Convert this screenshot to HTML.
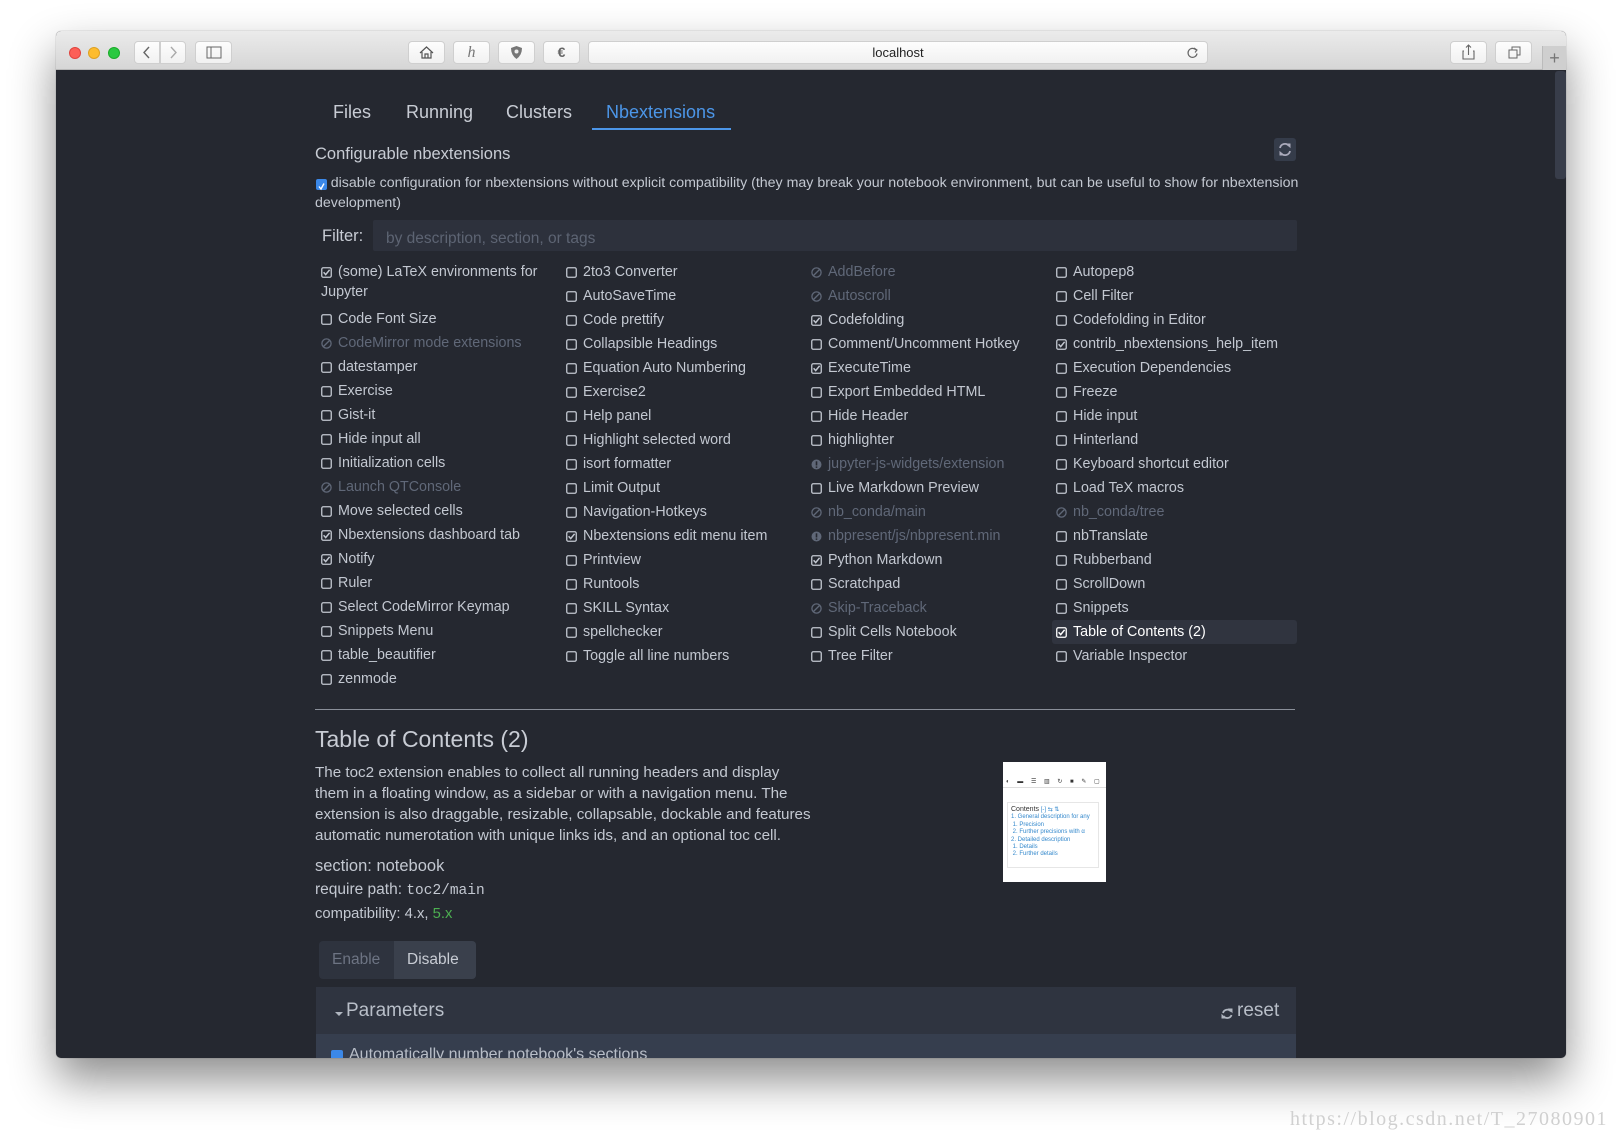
<!DOCTYPE html>
<html><head><meta charset="utf-8">
<style>
*{box-sizing:border-box;margin:0;padding:0}
html,body{width:1622px;height:1139px;overflow:hidden;background:#fff;font-family:"Liberation Sans",sans-serif}
#win{position:absolute;left:56px;top:31px;width:1510px;height:1027px;border-radius:5px;overflow:hidden;background:#252830;box-shadow:0 22px 45px rgba(0,0,0,.45),0 0 1px rgba(0,0,0,.4)}
#bar{position:absolute;left:0;top:0;width:1510px;height:39px;background:linear-gradient(#ebebeb,#d6d6d6);border-bottom:1px solid #b8b8b8}
.tl{position:absolute;top:16px;width:12px;height:12px;border-radius:50%}
.btn{position:absolute;top:10px;height:23px;background:linear-gradient(#fdfdfd,#f1f1f1);border:1px solid #cfcfcf;border-radius:4px}
.abs{position:absolute}
.t{color:#c3c8d1;font-size:14.5px;position:absolute;white-space:nowrap}
.col{position:absolute;top:0}
.it{position:relative;height:24px;line-height:24px;padding-left:17px;font-size:14.3px;color:#c3c8d1;white-space:nowrap}
.it.d{color:#606878}
.it svg{position:absolute;left:0;top:7px}
.it.hl{background:#30343f;border-radius:3px;color:#fff;margin-left:-4px;padding-left:21px;width:245px}
.it.hl svg{left:4px}
</style></head><body>
<div id="win">
 <div id="bar">
  <div class="tl" style="left:13px;background:#fc5f57;border:1px solid #e0443e"></div>
  <div class="tl" style="left:32px;background:#fdbc2e;border:1px solid #dea123"></div>
  <div class="tl" style="left:52px;background:#29c940;border:1px solid #1aab29"></div>
  <div class="btn" style="left:78px;width:26px;border-radius:4px 0 0 4px"><svg width="24" height="21"><path d="M14 5 L9 10.5 L14 16" stroke="#666" stroke-width="1.4" fill="none"/></svg></div>
  <div class="btn" style="left:104px;width:26px;border-radius:0 4px 4px 0"><svg width="24" height="21"><path d="M10 5 L15 10.5 L10 16" stroke="#aaa" stroke-width="1.4" fill="none"/></svg></div>
  <div class="btn" style="left:139px;width:37px"><svg width="35" height="21"><rect x="11" y="5" width="14" height="11" stroke="#666" fill="none"/><path d="M15 5V16" stroke="#666"/></svg></div>
  <div class="btn" style="left:352px;width:37px"><svg width="35" height="21"><path d="M11 11 L17.5 5 L24 11 M13 10 V16 H22 V10 M16 16 V12 H19 V16" stroke="#555" fill="none" stroke-width="1.2"/></svg></div>
  <div class="btn" style="left:397px;width:37px;text-align:center;font:italic 16px 'Liberation Serif',serif;color:#777;line-height:21px">h</div>
  <div class="btn" style="left:442px;width:37px"><svg width="35" height="21"><path d="M12 6 L17.5 4 L23 6 Q23 13 17.5 17 Q12 13 12 6Z" fill="#777"/><circle cx="17.5" cy="9.5" r="2" fill="#eee"/></svg></div>
  <div class="btn" style="left:487px;width:37px;text-align:center;font:bold 14px 'Liberation Sans';color:#666;line-height:21px">€</div>
  <div class="btn" style="left:532px;width:620px;text-align:center;font-size:13px;color:#222;line-height:21px">localhost<svg style="position:absolute;right:8px;top:4px" width="13" height="13"><path d="M10 4 A4.5 4.5 0 1 0 11 7.5" stroke="#666" fill="none" stroke-width="1.2"/><path d="M8 2 L11 4 L9 6.5" stroke="#666" fill="none" stroke-width="1.1"/></svg></div>
  <div class="btn" style="left:1394px;width:37px"><svg width="35" height="21"><path d="M13 9 H12 V17 H23 V9 H22 M17.5 13 V3 M15 5.5 L17.5 3 L20 5.5" stroke="#666" fill="none" stroke-width="1.1"/></svg></div>
  <div class="btn" style="left:1439px;width:37px"><svg width="35" height="21"><rect x="13" y="8" width="8" height="8" stroke="#666" fill="none"/><path d="M16 8 V5 H24 V13 H21" stroke="#666" fill="none"/></svg></div>
  <div style="position:absolute;left:1486px;top:15px;width:24px;height:24px;background:#cfcfcf;border-left:1px solid #bbb;color:#777;font-size:18px;text-align:center;line-height:24px">+</div>
 </div>
 <div class="abs" style="left:1499px;top:40px;width:11px;height:108px;background:#383d4a;border-radius:3px"></div>

 <div class="abs" style="left:0;top:40px;width:1498px;height:987px">
  <div class="t" style="left:277px;top:31px;font-size:18px;color:#c8ccd4">Files</div>
  <div class="t" style="left:350px;top:31px;font-size:18px;color:#c8ccd4">Running</div>
  <div class="t" style="left:450px;top:31px;font-size:18px;color:#c8ccd4">Clusters</div>
  <div class="t" style="left:550px;top:31px;font-size:18px;color:#4c96e8">Nbextensions</div>
  <div class="abs" style="left:536px;top:57px;width:139px;height:2px;background:#4c96e8"></div>

  <div class="t" style="left:259px;top:74px;font-size:16.5px;color:#c8ccd4">Configurable nbextensions</div>
  <div class="abs" style="left:1218px;top:67px;width:22px;height:23px;background:#353c4a;border-radius:3px"><svg width="22" height="23"><path d="M6 10 A5 5 0 0 1 15 8 M16 13 A5 5 0 0 1 7 15" stroke="#aab" stroke-width="1.8" fill="none"/><path d="M13 6 L16 6 L16 9Z M9 17 L6 17 L6 14Z" fill="#aab" stroke="#aab"/></svg></div>
  <div class="abs" style="left:260px;top:108px;width:11px;height:11px;background:#3b88e8;border-radius:2px"><svg width="11" height="11"><path d="M3 5.5 L5 8 L8 2.5" stroke="#fff" stroke-width="1.4" fill="none"/></svg></div>
  <div class="t" style="left:259px;top:102px;line-height:20px;font-size:14.2px">&nbsp;&nbsp;&nbsp;&nbsp;disable configuration for nbextensions without explicit compatibility (they may break your notebook environment, but can be useful to show for nbextension<br>development)</div>

  <div class="t" style="left:266px;top:156px;font-size:16.5px;color:#c8ccd4">Filter:</div>
  <div class="abs" style="left:317px;top:149px;width:924px;height:31px;background:#2d313c;border-radius:2px"></div>
  <div class="t" style="left:330px;top:159px;font-size:15.5px;color:#5d6473">by description, section, or tags</div>

  <div class="abs" style="left:265px;top:189px">
   <div class="col" style="left:0" id="c1"></div>
   <div class="col" style="left:245px" id="c2"></div>
   <div class="col" style="left:490px" id="c3"></div>
   <div class="col" style="left:735px" id="c4"></div>
  </div>

  <div class="abs" style="left:259px;top:638px;width:980px;height:1px;background:#8a8f99"></div>
  <div class="t" style="left:259px;top:655px;font-size:23px;color:#c8ccd4">Table of Contents (2)</div>
  <div class="t" style="left:259px;top:691px;line-height:21px;font-size:15.2px">The toc2 extension enables to collect all running headers and display<br>them in a floating window, as a sidebar or with a navigation menu. The<br>extension is also draggable, resizable, collapsable, dockable and features<br>automatic numerotation with unique links ids, and an optional toc cell.</div>
  <div class="t" style="left:259px;top:786px;font-size:16.5px">section: notebook</div>
  <div class="t" style="left:259px;top:810px;font-size:15.5px">require path: <span style="font-family:'Liberation Mono',monospace;font-size:14.5px">toc2/main</span></div>
  <div class="t" style="left:259px;top:835px;font-size:14.8px">compatibility: 4.x, <span style="color:#4caf50">5.x</span></div>

  <div class="abs" style="left:263px;top:870px;width:157px;height:38px;background:#2e333e;border-radius:4px;overflow:hidden">
   <div class="abs" style="left:75px;top:0;width:82px;height:38px;background:#3a404c"></div>
   <div class="t" style="left:13px;top:10px;font-size:15.5px;color:#6d7483">Enable</div>
   <div class="t" style="left:88px;top:10px;font-size:15.5px;color:#c8ccd4">Disable</div>
  </div>

  <div class="abs" style="left:260px;top:916px;width:980px;height:47px;background:#2f3440"></div>
  <svg class="abs" style="left:279px;top:940px" width="8" height="6"><path d="M0 1 L8 1 L4 5Z" fill="#b0b6c0"/></svg>
  <div class="t" style="left:290px;top:929px;font-size:19px;color:#b8bec8">Parameters</div>
  <svg class="abs" style="left:1164px;top:935px" width="14" height="15"><path d="M3 7 A4.5 4.5 0 0 1 11 5.5 M11.5 9 A4.5 4.5 0 0 1 3.5 10" stroke="#b0b6c0" stroke-width="1.8" fill="none"/><path d="M9 3 L12 3 L12 6Z M5 12 L2 12 L2 9Z" fill="#b0b6c0" stroke="#b0b6c0"/></svg>
  <div class="t" style="left:1181px;top:929px;font-size:19px;color:#b8bec8">reset</div>
  <div class="abs" style="left:260px;top:963px;width:980px;height:30px;background:#363e4e"></div>
  <div class="abs" style="left:275px;top:979px;width:12px;height:12px;background:#3b88e8;border-radius:2px"></div>
  <div class="t" style="left:293px;top:975px;font-size:16px;color:#b8bec8">Automatically number notebook's sections</div>

  <div class="abs" style="left:947px;top:691px;width:103px;height:120px;background:#fff;overflow:hidden;font-size:6px;color:#333">
   <div class="abs" style="left:0;top:14px;width:103px;height:12px;border-bottom:1px solid #ddd;font-size:6px;letter-spacing:3px;padding-left:3px;line-height:12px">◐ ▬ ☰ ▥ ↻ ■ ✎ ▢</div>
   <div class="abs" style="left:4px;top:40px;width:92px;height:66px;border:1px solid #e6e6e6;background:#fff;padding:3px;line-height:7.4px">
    <b style="font-weight:normal;font-size:7px">Contents</b> <span style="color:#38c">[-] ⇆ ⇅</span><br>
    <span style="color:#38c">1. General description for any</span><br>
    <span style="color:#38c">&nbsp;1. Precision</span><br>
    <span style="color:#38c">&nbsp;2. Further precisions with α</span><br>
    <span style="color:#38c">2. Detailed description</span><br>
    <span style="color:#38c">&nbsp;1. Details</span><br>
    <span style="color:#38c">&nbsp;2. Further details</span>
   </div>
  </div>
 </div>
</div>
<div style="position:absolute;left:1290px;top:1108px;font:20px 'Liberation Serif',serif;letter-spacing:1.5px;color:#d0d0d0">https://blog.csdn.net/T_27080901</div>

<script>
var C='<svg width="11" height="11"><rect x="0.75" y="0.75" width="9.5" height="9.5" rx="1.5" stroke="#c3c8d1" stroke-width="1.3" fill="none"/></svg>';
var K='<svg width="11" height="11"><rect x="0.75" y="0.75" width="9.5" height="9.5" rx="1.5" stroke="#c3c8d1" stroke-width="1.3" fill="none"/><path d="M2.6 5.3 L4.7 7.6 L8.6 2.8" stroke="#c3c8d1" stroke-width="1.5" fill="none"/></svg>';
var KW=K.replace(/#c3c8d1/g,'#fff');
var D='<svg width="11" height="11"><circle cx="5.5" cy="5.5" r="4.6" stroke="#606878" stroke-width="1.3" fill="none"/><path d="M2.5 8.5 L8.5 2.5" stroke="#606878" stroke-width="1.3"/></svg>';
var I='<svg width="11" height="11"><circle cx="5.5" cy="5.5" r="5" fill="#606878"/><rect x="4.7" y="2.3" width="1.6" height="4.2" fill="#252830"/><rect x="4.7" y="7.4" width="1.6" height="1.5" fill="#252830"/></svg>';
var cols=[
[["k","(some) LaTeX environments for<br>Jupyter",1],["c","Code Font Size"],["d","CodeMirror mode extensions"],["c","datestamper"],["c","Exercise"],["c","Gist-it"],["c","Hide input all"],["c","Initialization cells"],["d","Launch QTConsole"],["c","Move selected cells"],["k","Nbextensions dashboard tab"],["k","Notify"],["c","Ruler"],["c","Select CodeMirror Keymap"],["c","Snippets Menu"],["c","table_beautifier"],["c","zenmode"]],
[["c","2to3 Converter"],["c","AutoSaveTime"],["c","Code prettify"],["c","Collapsible Headings"],["c","Equation Auto Numbering"],["c","Exercise2"],["c","Help panel"],["c","Highlight selected word"],["c","isort formatter"],["c","Limit Output"],["c","Navigation-Hotkeys"],["k","Nbextensions edit menu item"],["c","Printview"],["c","Runtools"],["c","SKILL Syntax"],["c","spellchecker"],["c","Toggle all line numbers"]],
[["d","AddBefore"],["d","Autoscroll"],["k","Codefolding"],["c","Comment/Uncomment Hotkey"],["k","ExecuteTime"],["c","Export Embedded HTML"],["c","Hide Header"],["c","highlighter"],["i","jupyter-js-widgets/extension"],["c","Live Markdown Preview"],["d","nb_conda/main"],["i","nbpresent/js/nbpresent.min"],["k","Python Markdown"],["c","Scratchpad"],["d","Skip-Traceback"],["c","Split Cells Notebook"],["c","Tree Filter"]],
[["c","Autopep8"],["c","Cell Filter"],["c","Codefolding in Editor"],["k","contrib_nbextensions_help_item"],["c","Execution Dependencies"],["c","Freeze"],["c","Hide input"],["c","Hinterland"],["c","Keyboard shortcut editor"],["c","Load TeX macros"],["d","nb_conda/tree"],["c","nbTranslate"],["c","Rubberband"],["c","ScrollDown"],["c","Snippets"],["h","Table of Contents (2)"],["c","Variable Inspector"]]];
cols.forEach(function(col,ci){var h='';col.forEach(function(e){
 var ic={c:C,k:K,d:D,i:I,h:KW}[e[0]];
 var cls='it'+((e[0]=='d'||e[0]=='i')?' d':'')+(e[0]=='h'?' hl':'');
 var st=e[2]?' style="height:47px;line-height:20px;padding-top:2px;padding-left:0;text-indent:17px"':'';
 h+='<div class="'+cls+'"'+st+'>'+ic+e[1]+'</div>';});
 document.getElementById('c'+(ci+1)).innerHTML=h;});
</script>
</body></html>
